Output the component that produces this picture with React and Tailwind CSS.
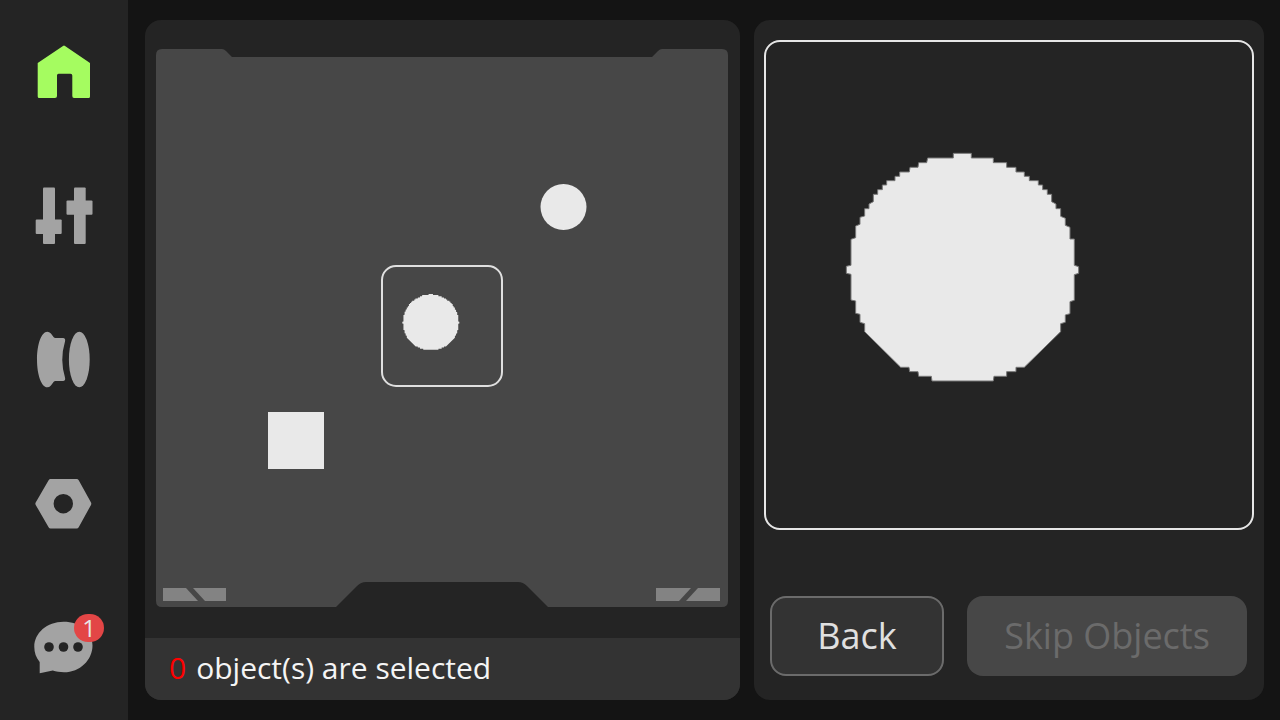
const DISC =
  "M370 40H424V54H490V68H530V82H558V96H583V109H598V122H625V135H638V149H652V163H665V185L678 192V206H692V229L706 235V256L720 262V297H733V376L746 380V400L733 404V481L720 485V521L706 525V547L692 551V575L583 682H558V695H530V709H492L490 723H306L304 709H266L264 695H239L237 682H212L104 575V551L90 547V523L77 520V483L63 480V403L49 400V379L63 376V298L77 293V258L90 253V232L104 228V206H117V192L130 185V163H143V149H157V135H170V122H195V109H209V96H238L240 82H264L266 68H290L293 54H370Z";

function HomeIcon() {
  return (
    <svg viewBox="0 0 64 64" className="size-16" fill="#a5fc60">
      <path d="M31 6Q32 5 33 6L58 23V56.5Q58 58 56.5 58H42Q40.3 58 40.3 56V35.5Q40.3 33.7 38.5 33.7H26.5Q25 33.7 25 35.5V56Q25 58 23 58H7.2Q5.7 58 5.7 56.5V23Z" />
    </svg>
  );
}

function ControlsIcon() {
  return (
    <svg viewBox="0 0 64 64" className="size-16" fill="#a3a3a3">
      <rect x="11" y="3.5" width="12" height="56.5" rx="1" />
      <rect x="3.7" y="35.5" width="26" height="14.5" rx="1" />
      <rect x="42" y="3.5" width="11.7" height="56.5" rx="1" />
      <rect x="34.5" y="16.5" width="26" height="14.3" rx="1" />
    </svg>
  );
}

function FilamentIcon() {
  return (
    <svg viewBox="0 0 64 64" className="size-16" fill="#a3a3a3">
      <ellipse cx="47.3" cy="31.5" rx="10.4" ry="27.8" />
      <path d="M15.3 3.7C18 3.7 19.5 6 21.5 9Q22.3 10 23.5 10H31Q33.8 10.3 33 13.5Q27.6 31.5 33 49.5Q33.8 52.7 31 53H23.5Q22.3 53 21.5 54C19.5 57 18 59.3 15.3 59.3C9.5 59.3 5 47 5 31.5C5 16 9.5 3.7 15.3 3.7Z" />
    </svg>
  );
}

function SettingsIcon() {
  return (
    <svg viewBox="0 0 64 64" className="size-16" fill="#a3a3a3">
      <path
        fillRule="evenodd"
        d="M18.6 7H44.6Q46 7 46.7 8.2L59 30.5Q59.6 31.7 59 32.9L46.7 55.2Q46 56.4 44.6 56.4H18.6Q17.3 56.4 16.6 55.2L3.7 32.9Q3 31.7 3.7 30.5L16.6 8.2Q17.3 7 18.6 7ZM31.3 22A9.7 9.7 0 1 0 31.3 41.4A9.7 9.7 0 1 0 31.3 22Z"
      />
    </svg>
  );
}

function MessagesIcon() {
  return (
    <svg viewBox="0 0 64 64" className="size-16" fill="#a3a3a3">
      <path d="M31.5 5.8C48 5.8 60.5 16 60.5 29.5C60.5 44 48 56.3 32 56.3C28 56.3 24 55.6 20.8 54.6L7.7 57.3V46C4 41.5 2.3 36.5 2.3 31C2.3 17 15 5.8 31.5 5.8Z" />
      <g fill="#242424">
        <circle cx="17" cy="31" r="4.8" />
        <circle cx="31.5" cy="31" r="4.8" />
        <circle cx="46" cy="31" r="4.8" />
      </g>
    </svg>
  );
}

const navItems = [
  { label: "Home", Icon: HomeIcon },
  { label: "Controls", Icon: ControlsIcon },
  { label: "Filament", Icon: FilamentIcon },
  { label: "Settings", Icon: SettingsIcon },
  { label: "Messages", Icon: MessagesIcon, badge: 1 },
];

function Sidebar() {
  return (
    <nav className="w-32 shrink-0 bg-[#242424] flex flex-col">
      {navItems.map(({ label, Icon, badge }) => (
        <button key={label} aria-label={label} className="flex-1 flex items-center justify-center">
          <span className="relative">
            <Icon />
            {badge && (
              <span className="absolute -top-0.5 -right-2 w-[30px] h-7 rounded-full bg-[#e34646] text-[#e8e8e8] text-2xl leading-7 text-center">
                {badge}
              </span>
            )}
          </span>
        </button>
      ))}
    </nav>
  );
}

function BuildPlate() {
  return (
    <svg viewBox="0 0 572 558" className="w-full">
      <path
        fill="#474747"
        d="M6 0H66Q68 0 70 2L76 8H496L502 2Q504 0 506 0H566Q572 0 572 6V552Q572 558 566 558H392L371 537Q367 533 362 533H210Q205 533 201 537L180 558H6Q0 558 0 552V6Q0 0 6 0Z"
      />
      <g fill="#838383">
        <path d="M7 539H30L42 552H7Z" />
        <path d="M37 539H70V552H49Z" />
        <path d="M500 539H535L523 552H500Z" />
        <path d="M542 539H564V552H530Z" />
      </g>
      <g fill="#e9e9e9">
        <rect x="112" y="363" width="56" height="57" />
        <circle cx="407.5" cy="158" r="23" />
        <path d={DISC} transform="translate(242.3 241.7) scale(0.0818)" />
      </g>
      <rect x="226" y="217" width="120" height="120" rx="14" fill="none" stroke="#e0e0e0" strokeWidth="2" />
    </svg>
  );
}

function PlatePanel() {
  return (
    <section className="min-w-0 rounded-2xl bg-[#242424] overflow-hidden flex flex-col">
      <div className="flex-1 flex items-center pl-[11px] pr-3 pb-0.5">
        <BuildPlate />
      </div>
      <p className="bg-[#333333] h-[62px] px-6 pb-1 flex items-center gap-2.5 text-[30px] text-[#f5f5f5]">
        <span className="text-[#ff0000]">0</span>
        <span>object(s) are selected</span>
      </p>
    </section>
  );
}

function PreviewPanel() {
  return (
    <section className="min-w-0 rounded-2xl bg-[#242424] px-2.5 pt-5 pb-6 flex flex-col justify-between">
      <div className="aspect-square rounded-2xl border-2 border-[#e6e6e6]">
        <svg viewBox="0 0 486 486" className="w-full">
          <path d={DISC} transform="translate(64 98) scale(0.3333)" fill="#e9e9e9" stroke="#777777" strokeWidth="3" />
        </svg>
      </div>
      <div className="grid grid-cols-[174fr_280fr] gap-[23px] pl-1.5 pr-[7px] text-4xl">
        <button className="h-20 rounded-2xl border-2 border-[#6b6b6b] bg-[#333333] text-[#e0e0e0]">
          Back
        </button>
        <button disabled className="h-20 rounded-2xl bg-[#474747] text-[#6b6b6b]">
          Skip Objects
        </button>
      </div>
    </section>
  );
}

export default function App() {
  return (
    <div className="min-h-screen bg-[#141414] flex font-['Open_Sans',sans-serif]">
      <Sidebar />
      <main className="flex-1 min-w-0 grid grid-cols-[595fr_510fr] gap-3.5 py-5 pl-[17px] pr-4">
        <PlatePanel />
        <PreviewPanel />
      </main>
    </div>
  );
}
